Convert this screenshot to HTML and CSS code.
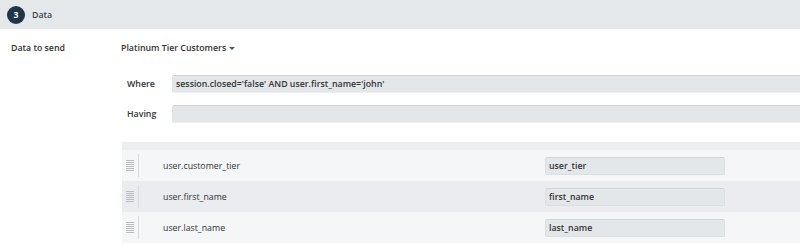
FILE: index.html
```html
<!DOCTYPE html>
<html lang="en">
<head>
    <meta charset="UTF-8">
    <title>Data</title>
    <link rel="stylesheet" href="styles.css">
</head>
<body>
    <div class="step-header">
        <span class="step-num">3</span>
        <span class="step-title">Data</span>
    </div>

    <div class="send-row">
        <div class="send-label">Data to send</div>
        <div class="segment">Platinum Tier Customers <span class="caret"></span></div>
    </div>

    <div class="filters">
        <div class="filter-row">
            <label class="filter-label">Where</label>
            <div class="filter-input">session.closed='false' AND user.first_name='john'</div>
        </div>
        <div class="filter-row">
            <label class="filter-label">Having</label>
            <div class="filter-input"></div>
        </div>
    </div>

    <div class="fields">
        <div class="fields-head"></div>
        <div class="field">
            <div class="handle"><span></span></div>
            <div class="field-name">user.customer_tier</div>
            <div class="field-alias">user_tier</div>
        </div>
        <div class="field alt">
            <div class="handle"><span></span></div>
            <div class="field-name">user.first_name</div>
            <div class="field-alias">first_name</div>
        </div>
        <div class="field">
            <div class="handle"><span></span></div>
            <div class="field-name">user.last_name</div>
            <div class="field-alias">last_name</div>
        </div>
    </div>
</body>
</html>
```

FILE: styles.css
```css
body {
    margin: 0;
    font-family: "Open Sans", sans-serif;
    font-size: 8.8px;
    color: #333;
    background: #fff;
    overflow: hidden;
}
.step-header {
    height: 29px;
    background-color: #e5e8eb;
    display: flex;
    align-items: center;
    padding-left: 7px;
}
.step-num {
    width: 18px;
    height: 18px;
    border-radius: 50%;
    background-color: #1f3548;
    color: #fff;
    font-weight: 700;
    display: flex;
    align-items: center;
    justify-content: center;
}
.step-title {
    margin-left: 7px;
    font-weight: 600;
    color: #3a4550;
}
.send-row {
    display: flex;
    align-items: center;
    height: 18px;
    margin-top: 10px;
    padding-left: 11px;
    font-weight: 600;
}
.send-label {
    width: 110px;
}
.caret {
    display: inline-block;
    margin-left: 1px;
    vertical-align: middle;
    border-left: 3px solid transparent;
    border-right: 3px solid transparent;
    border-top: 3px solid #555;
}
.filters {
    margin-top: 18px;
    padding-left: 127px;
}
.filter-row {
    display: flex;
    align-items: center;
    margin-bottom: 12px;
}
.filter-label {
    width: 45px;
    font-weight: 600;
}
.filter-input {
    flex: 1;
    height: 16px;
    line-height: 16px;
    padding-left: 3px;
    background-color: #e4e7ea;
    border-top: 1px solid #d2d5d8;
    border-bottom: 1px solid #eef0f2;
    border-left: 1px solid #e0e3e6;
    border-radius: 2px 0 0 2px;
    font-weight: 600;
}
.fields {
    margin-top: 19px;
    margin-left: 122px;
}
.fields-head {
    height: 8px;
    background-color: #eceef0;
}
.field {
    height: 31px;
    display: flex;
    align-items: center;
    background-color: #f5f6f7;
}
.field.alt {
    background-color: #eaecef;
}
.handle {
    width: 16px;
    height: 23px;
    border-right: 1px solid #d8dbde;
    display: flex;
    align-items: center;
}
.handle span {
    margin-left: 4px;
    width: 8px;
    height: 11px;
    background: repeating-linear-gradient(to bottom, #b8bcc0 0, #b8bcc0 1px, transparent 1px, transparent 2px);
}
.field-name {
    width: 382px;
    padding-left: 24px;
}
.field-alias {
    width: 175px;
    height: 16px;
    line-height: 16px;
    padding-left: 3px;
    background-color: #e4e7ea;
    border: 1px solid #dcdfe2;
    border-top-color: #d2d5d8;
    border-radius: 2px;
    font-weight: 600;
}
```
